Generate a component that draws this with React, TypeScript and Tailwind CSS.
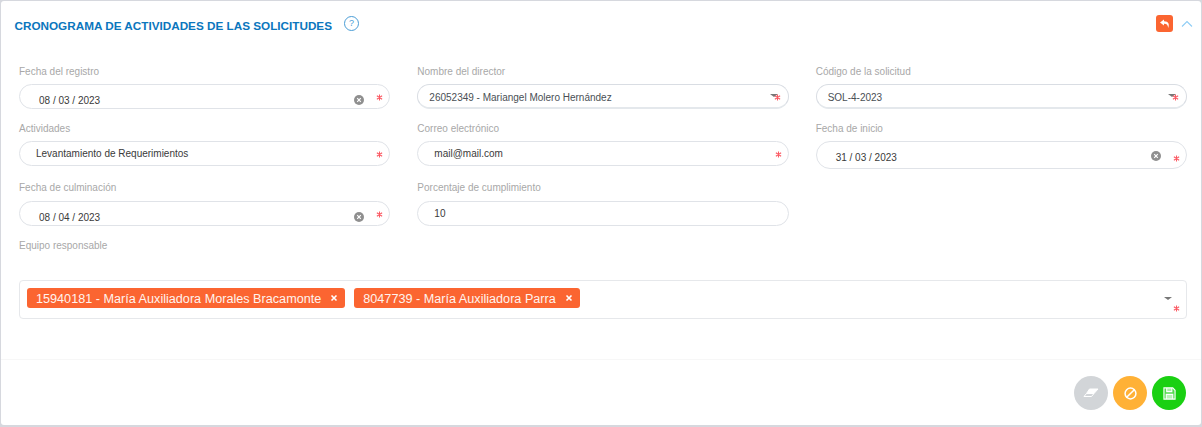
import React from 'react';
import { Ban } from 'lucide-react';

const Star: React.FC<{ className: string }> = ({ className }) => (
  <svg viewBox="0 0 8 8" className={`absolute w-[7px] h-[7px] ${className}`} stroke="#fb5a64" strokeWidth="1.2">
    <path d="M4 0.5V7.5M1 2L7 6M7 2L1 6" />
  </svg>
);

const ClearIcon: React.FC<{ className: string }> = ({ className }) => (
  <svg viewBox="0 0 10 10" className={`absolute w-[10px] h-[10px] ${className}`}>
    <circle cx="5" cy="5" r="5" fill="#8f8f8f" />
    <path d="M3.2 3.2L6.8 6.8M6.8 3.2L3.2 6.8" stroke="#fff" strokeWidth="1.2" />
  </svg>
);

const Caret: React.FC<{ className: string }> = ({ className }) => (
  <span className={`absolute w-0 h-0 border-x-[4px] border-x-transparent border-t-[3px] border-t-[#777] ${className}`} />
);

const Label: React.FC<{ text: string }> = ({ text }) => (
  <label className="block h-[14px] leading-[14px] text-[10px] text-[#a8a8a8]">{text}</label>
);

const DateField: React.FC<{ label: string; value: string; tall?: boolean; gap?: string }> = ({ label, value, tall, gap = 'mt-[5px]' }) => (
  <div>
    <Label text={label} />
    <div className={`relative ${gap} border border-[#e0e3e8] rounded-[14px] pl-[19px] pt-[8px] text-[10px] text-[#3a3a3a] ${tall ? 'h-[28px]' : 'h-[25px]'}`}>
      {value}
      <ClearIcon className={tall ? 'right-[25px] top-[9px]' : 'right-[25px] top-[10px]'} />
      <Star className={tall ? 'right-[6px] top-[13px]' : 'right-[6px] top-[9px]'} />
    </div>
  </div>
);

const SelectField: React.FC<{ label: string; value: string }> = ({ label, value }) => (
  <div>
    <Label text={label} />
    <div className="relative mt-[5px] h-[25px] border border-[#d9dde3] border-b-2 border-b-[#e4e8ec] rounded-[14px] pl-[11px] leading-[25px] text-[10px] text-[#4a4f55]">
      {value}
      <Caret className="right-[10px] top-[9px]" />
      <Star className="right-[7px] top-[9px]" />
    </div>
  </div>
);

const TextField: React.FC<{ label: string; value: string; star?: boolean; gap?: string }> = ({ label, value, star, gap = 'mt-[5px]' }) => (
  <div>
    <Label text={label} />
    <div className={`relative ${gap} h-[25px] border border-[#e0e3e8] rounded-[14px] pl-[16px] leading-[23px] text-[10px] text-[#3a3a3a]`}>
      {value}
      {star && <Star className="right-[6px] top-[9px]" />}
    </div>
  </div>
);

const Tag: React.FC<{ text: string }> = ({ text }) => (
  <span className="flex items-center h-[20px] bg-[#fb6531] rounded-[3px] pl-[9px] pr-[7px] text-[12.65px] text-[#fff3ee]">
    <span className="mt-[2px]">{text}</span>
    <svg viewBox="0 0 8 8" className="w-2 h-2 ml-[9px]" stroke="#fff" strokeWidth="1.6">
      <path d="M1.5 1.5L6.5 6.5M6.5 1.5L1.5 6.5" />
    </svg>
  </span>
);

export default function App() {
  return (
    <div className="w-[1202px] h-[427px] bg-[#d6d8de] font-['Liberation_Sans',sans-serif] pt-px pl-px pr-px pb-[2px]">
      <div className="h-full bg-white rounded-[3px] flex flex-col">
        <header className="relative h-[64px] pl-[13.5px] pt-[15px] flex items-start">
          <h1 className="text-[11.72px] leading-[20px] font-bold text-[#0b76bd]">CRONOGRAMA DE ACTIVIDADES DE LAS SOLICITUDES</h1>
          <span className="ml-[12px] w-[15px] h-[15px] rounded-full border border-[#4a9dd6] text-[9px] leading-[13px] text-center text-[#4a9dd6]">?</span>
          <div className="absolute right-[8px] top-[14px] flex items-center gap-[8px]">
            <span className="flex items-center justify-center w-[17px] h-[17px] rounded-[3px] bg-[#fb6531]">
              <svg viewBox="0 0 12 12" className="w-[12px] h-[12px]" fill="#fff">
                <path d="M5 1.5L1 4.6L5 7.5V5.7C7.6 5.5 8.8 6.6 9.2 10C10.6 6.6 9.8 3.3 5 3.3Z" />
              </svg>
            </span>
            <svg viewBox="0 0 12 8" className="w-[12px] h-[8px] mt-[1px]" fill="none" stroke="#8fcdf5" strokeWidth="1.1">
              <path d="M1 6.5L6 1.5L11 6.5" />
            </svg>
          </div>
        </header>

        <div className="pl-[18px] pr-[14px] grid grid-cols-3 gap-x-[27px]">
          <div className="h-[57px]"><DateField label="Fecha del registro" value="08 / 03 / 2023" /></div>
          <div className="h-[57px]"><SelectField label="Nombre del director" value="26052349 - Mariangel Molero Hernández" /></div>
          <div className="h-[57px]"><SelectField label="Código de la solicitud" value="SOL-4-2023" /></div>

          <div className="h-[59px]"><TextField label="Actividades" value="Levantamiento de Requerimientos" star /></div>
          <div className="h-[59px]"><TextField label="Correo electrónico" value="mail@mail.com" star /></div>
          <div className="h-[59px]"><DateField label="Fecha de inicio" value="31 / 03 / 2023" tall /></div>

          <div className="h-[58px]"><DateField label="Fecha de culminación" value="08 / 04 / 2023" gap="mt-[6px]" /></div>
          <div className="h-[58px]"><TextField label="Porcentaje de cumplimiento" value="10" gap="mt-[6px]" /></div>
        </div>

        <div className="px-[18px]">
          <Label text="Equipo responsable" />
        </div>

        <div className="ml-[18px] mr-[14px] mt-[27px] relative h-[39px] border border-[#e6e8eb] rounded-[4px] pl-[7px] pt-[7px] flex gap-[9px] items-start">
          <Tag text="15940181 - María Auxiliadora Morales Bracamonte" />
          <Tag text="8047739 - María Auxiliadora Parra" />
          <Caret className="right-[14px] top-[16px]" />
          <Star className="right-[6px] top-[24px]" />
        </div>

        <footer className="mt-[40px] flex-1 border-t border-[#f7f7f7] flex justify-end items-start gap-[5px] pt-[16px] pr-[15px]">
          <button className="flex items-center justify-center w-[34px] h-[34px] rounded-full bg-[#d2d5d8]">
            <svg viewBox="0 0 16 16" className="w-[16px] h-[16px]" fill="none" stroke="#fff" strokeWidth="1">
              <path d="M6.5 4H15L11 8.5H3.5Z" fill="#fff" />
              <path d="M3.5 8.5L1 11.5H8.5L11 8.5" />
            </svg>
          </button>
          <button className="flex items-center justify-center w-[34px] h-[34px] rounded-full bg-[#ffb136]">
            <Ban className="w-[13px] h-[13px] text-white -scale-x-100" strokeWidth={2.8} />
          </button>
          <button className="flex items-center justify-center w-[34px] h-[34px] rounded-full bg-[#1ad012]">
            <svg viewBox="0 0 14 14" className="w-[13px] h-[13px]" fill="none" stroke="#fff" strokeWidth="1.2">
              <path d="M1 1H10.5L13 3.5V13H1Z" fill="#fff" fillOpacity="0.25" />
              <path d="M4 1V5H9.5V1" fill="#fff" fillOpacity="0.5" />
              <path d="M3.5 13V8H10.5V13" fill="#fff" fillOpacity="0.6" />
            </svg>
          </button>
        </footer>
      </div>
    </div>
  );
}
